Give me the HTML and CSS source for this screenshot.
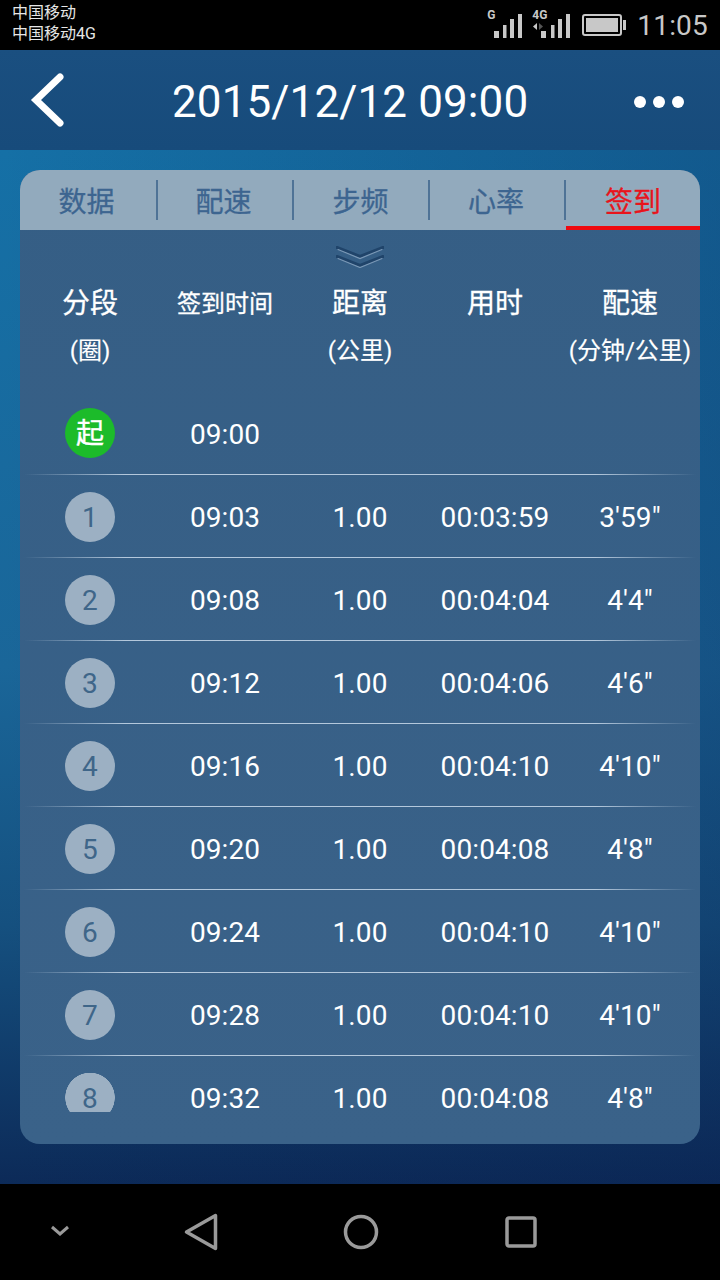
FILE: index.html
```
<!DOCTYPE html>
<html lang="zh">
<head>
<meta charset="utf-8">
<title>签到</title>
<link rel="stylesheet" href="styles.css">
</head>
<body>
<div class="status">
  <div class="carriers"><div>中国移动</div><div>中国移动4G</div></div>
  <div class="status-right">
    <div class="sig sig-g">
      <span class="sig-label">G</span>
      <svg width="30" height="24" viewBox="0 0 30 24"><g fill="#c8c8c8"><rect x="0" y="17" width="5" height="7"/><rect x="9" y="11" width="3.500" height="13"/><rect x="16" y="5" width="4" height="19"/><rect x="24" y="0" width="4" height="24"/></g></svg>
    </div>
    <div class="sig sig-4g">
      <span class="sig-label">4G</span>
      <svg width="30" height="24" viewBox="0 0 30 24"><g fill="#c8c8c8"><rect x="0" y="17" width="5" height="7"/><rect x="10" y="11" width="3.500" height="13"/><rect x="17" y="5" width="4" height="19"/><rect x="25" y="0" width="4" height="24"/></g></svg>
      <svg class="arrows" width="12" height="8" viewBox="0 0 12 8"><path d="M4 0v7L0 3.500z" fill="#c8c8c8"/><path d="M6 0v7l4-3.500z" fill="#555"/></svg>
    </div>
    <svg class="battery" width="44" height="22" viewBox="0 0 44 22"><rect x="1" y="1" width="38" height="20" rx="2" fill="none" stroke="#c8c8c8" stroke-width="2"/><rect x="4" y="4" width="32" height="14" fill="#c8c8c8"/><rect x="41" y="6" width="3" height="10" fill="#c8c8c8"/></svg>
    <span class="clock">11:05</span>
  </div>
</div>
<header class="topbar">
  <svg class="back" width="36" height="56" viewBox="0 0 36 56"><path d="M31 5L7 28l24 23" fill="none" stroke="#fff" stroke-width="7" stroke-linecap="round" stroke-linejoin="miter"/></svg>
  <h1 class="title">2015/12/12 09:00</h1>
  <div class="dots"><i></i><i></i><i></i></div>
</header>
<main class="stage">
  <section class="card">
    <nav class="tabs">
      <div class="tab">数据</div>
      <div class="tab">配速</div>
      <div class="tab">步频</div>
      <div class="tab">心率</div>
      <div class="tab active">签到</div>
    </nav>
    <div class="chev">
      <svg width="48" height="22" viewBox="0 0 48 22"><g fill="none" stroke-linecap="round"><path d="M1 1.500l23 9 23-9M1 10.500l23 9 23-9" stroke="#20446a" stroke-width="3"/><path d="M2 3.500l22 9 22-9M2 12.500l22 9 22-9" stroke="#7a98b6" stroke-width="1.200"/></g></svg>
    </div>
    <div class="heads">
      <div class="head"><div class="h1">分段</div><div class="h2">(圈)</div></div>
      <div class="head"><div class="h1 small">签到时间</div></div>
      <div class="head"><div class="h1">距离</div><div class="h2">(公里)</div></div>
      <div class="head"><div class="h1">用时</div></div>
      <div class="head"><div class="h1">配速</div><div class="h2">(分钟/公里)</div></div>
    </div>
    <div class="list">
      <div class="row"><div class="cell"><span class="badge start">起</span></div><div class="cell">09:00</div><div class="cell"></div><div class="cell"></div><div class="cell"></div></div>
      <div class="row"><div class="cell"><span class="badge">1</span></div><div class="cell">09:03</div><div class="cell">1.00</div><div class="cell">00:03:59</div><div class="cell">3'59"</div></div>
      <div class="row"><div class="cell"><span class="badge">2</span></div><div class="cell">09:08</div><div class="cell">1.00</div><div class="cell">00:04:04</div><div class="cell">4'4"</div></div>
      <div class="row"><div class="cell"><span class="badge">3</span></div><div class="cell">09:12</div><div class="cell">1.00</div><div class="cell">00:04:06</div><div class="cell">4'6"</div></div>
      <div class="row"><div class="cell"><span class="badge">4</span></div><div class="cell">09:16</div><div class="cell">1.00</div><div class="cell">00:04:10</div><div class="cell">4'10"</div></div>
      <div class="row"><div class="cell"><span class="badge">5</span></div><div class="cell">09:20</div><div class="cell">1.00</div><div class="cell">00:04:08</div><div class="cell">4'8"</div></div>
      <div class="row"><div class="cell"><span class="badge">6</span></div><div class="cell">09:24</div><div class="cell">1.00</div><div class="cell">00:04:10</div><div class="cell">4'10"</div></div>
      <div class="row"><div class="cell"><span class="badge">7</span></div><div class="cell">09:28</div><div class="cell">1.00</div><div class="cell">00:04:10</div><div class="cell">4'10"</div></div>
      <div class="row"><div class="cell"><span class="badge">8</span></div><div class="cell">09:32</div><div class="cell">1.00</div><div class="cell">00:04:08</div><div class="cell">4'8"</div></div>
    </div>
  </section>
</main>
<footer class="navbar">
  <svg class="nav-chev" width="20" height="12" viewBox="0 0 20 12"><path d="M2 2l8 7 8-7" fill="none" stroke="#9a9a9a" stroke-width="3"/></svg>
  <svg class="nav-back" width="34" height="38" viewBox="0 0 34 38"><path d="M2.500 19L31.500 2.500v33z" fill="none" stroke="#9a9a9a" stroke-width="3.500" stroke-linejoin="round"/></svg>
  <svg class="nav-home" width="36" height="36" viewBox="0 0 36 36"><circle cx="18" cy="18" r="15.500" fill="none" stroke="#9a9a9a" stroke-width="3.500"/></svg>
  <svg class="nav-recent" width="32" height="32" viewBox="0 0 32 32"><rect x="2" y="2" width="28" height="28" rx="2" fill="none" stroke="#9a9a9a" stroke-width="3.500"/></svg>
</footer>
</body>
</html>
```
FILE: styles.css
```
* { box-sizing: border-box; }
html, body { margin: 0; padding: 0; }
body {
  width: 720px;
  height: 1280px;
  overflow: hidden;
  display: flex;
  flex-direction: column;
  background: #000;
  font-family: Roboto, "Noto Sans CJK SC", sans-serif;
  color: #fff;
}
.status {
  height: 50px;
  flex: none;
  background: #000;
  display: flex;
  justify-content: space-between;
}
.carriers {
  padding: 2px 0 0 12px;
  font-size: 16px;
  line-height: 21px;
  color: #e6e6e6;
}
.status-right {
  display: flex;
  align-items: center;
  padding-right: 12px;
}
.sig { position: relative; width: 30px; height: 24px; margin-top: 1px; }
.sig svg { display: block; }
.sig-g { margin-right: 17px; }
.sig-4g { margin-right: 11px; }
.sig-label {
  position: absolute;
  left: -7px;
  top: -5px;
  font-size: 12px;
  line-height: 13px;
  font-weight: 700;
  color: #c8c8c8;
}
.sig-4g .sig-label { left: -9px; }
.sig .arrows { position: absolute; left: -8px; top: 9px; }
.battery { margin-right: 11px; }
.clock { font-size: 28px; color: #c8c8c8; letter-spacing: .2px; }
.topbar {
  height: 100px;
  flex: none;
  background: linear-gradient(#1a4f80, #174b7b);
  position: relative;
  display: flex;
  align-items: flex-start;
  padding-left: 172px;
}
.title {
  margin: 0;
  font-size: 44px;
  font-weight: 400;
  line-height: 104px;
  letter-spacing: .1px;
}
.back { position: absolute; left: 29px; top: 22px; }
.dots {
  position: absolute;
  right: 36px;
  top: 46px;
  display: flex;
  gap: 7px;
}
.dots i { width: 12px; height: 12px; border-radius: 50%; background: #fff; }
.stage {
  height: 1034px;
  flex: none;
  padding: 20px 20px 40px;
  background:
    linear-gradient(90deg, rgba(10, 32, 80, 0) 0%, rgba(10, 32, 80, .28) 100%),
    linear-gradient(#1570a6 0%, #1a6699 50%, #15507f 75%, #0c2a58 100%);
}
.card {
  height: 974px;
  border-radius: 20px;
  overflow: hidden;
  background: linear-gradient(#355e85, #3a6289);
  display: flex;
  flex-direction: column;
}
.tabs {
  height: 60px;
  flex: none;
  display: flex;
  background: #92aabd;
}
.tab {
  flex: 1;
  position: relative;
  font-size: 28px;
  -webkit-text-stroke: .3px currentColor;
  line-height: 66px;
  text-align: center;
  color: #3d6590;
}
.tab:nth-child(1) { text-indent: -3px; }
.tab:nth-child(2) { text-indent: -1px; }
.tab:nth-child(3) { text-indent: 1px; }
.tab:nth-child(5) { text-indent: 2px; }
.tab + .tab::before {
  content: "";
  position: absolute;
  left: 0;
  top: 10px;
  width: 2px;
  height: 40px;
  background: #4f7396;
}
.tab.active { color: #e8141c; }
.tab.active::after {
  content: "";
  position: absolute;
  left: 2px;
  right: 0;
  bottom: 0;
  height: 4px;
  background: #ee0a10;
}
.chev {
  height: 26px;
  flex: none;
  padding-top: 16px;
  display: flex;
  justify-content: center;
  align-items: flex-start;
}
.chev svg { display: block; flex: none; }
.heads {
  height: 136px;
  flex: none;
  display: flex;
  padding: 0 2.5px;
  align-items: flex-start;
}
.head { width: 135px; text-align: center; }
.h1 { font-size: 28px; -webkit-text-stroke: .3px currentColor; line-height: 40px; height: 40px; margin-top: 28px; }
.h1.small { font-size: 24px; }
.h2 { font-size: 24px; -webkit-text-stroke: .15px currentColor; line-height: 36px; margin-top: 9px; }
.list {
  height: 720px;
  flex: none;
}
.row {
  height: 83px;
  display: flex;
  padding: 0 2.5px;
  align-items: center;
  position: relative;
}
.row:not(:last-child)::after {
  content: "";
  position: absolute;
  left: 4px;
  right: 4px;
  bottom: 0;
  height: 1px;
  background: linear-gradient(90deg, rgba(190,210,230,0), #b4c8dc 15%, #b4c8dc 85%, rgba(190,210,230,0));
}
.cell {
  width: 135px;
  height: 26px;
  margin-top: 2px;
  font-size: 28px;
  line-height: 26px;
  letter-spacing: .1px;
  display: flex;
  justify-content: center;
}
.cell:first-child { height: 50px; margin-top: 0; }
.badge {
  width: 50px;
  height: 50px;
  padding-top: 2px;
  border-radius: 50%;
  background: #9cb0c3;
  color: #3f6689;
  display: flex;
  align-items: center;
  justify-content: center;
}
.badge.start { background: #1cbb2a; color: #fff; -webkit-text-stroke: .4px currentColor; margin-top: -1px; }
.row:last-child { height: 56px; align-items: flex-start; }
.row:last-child .cell { margin-top: 30px; }
.row:last-child .cell:first-child { margin-top: 16px; height: 40px; }
.row:last-child .badge {
  height: 40px;
  padding-top: 14px;
  align-items: flex-start;
  border-radius: 0;
  background: radial-gradient(circle at 25px 25.5px, #9cb0c3 24.5px, rgba(156, 176, 195, 0) 25px);
}
.navbar {
  flex: 1;
  background: #000;
  position: relative;
}
.navbar svg { position: absolute; }
.nav-chev { left: 50px; top: 41px; }
.nav-back { left: 184px; top: 29px; }
.nav-home { left: 343px; top: 30px; }
.nav-recent { left: 505px; top: 32px; }
```
